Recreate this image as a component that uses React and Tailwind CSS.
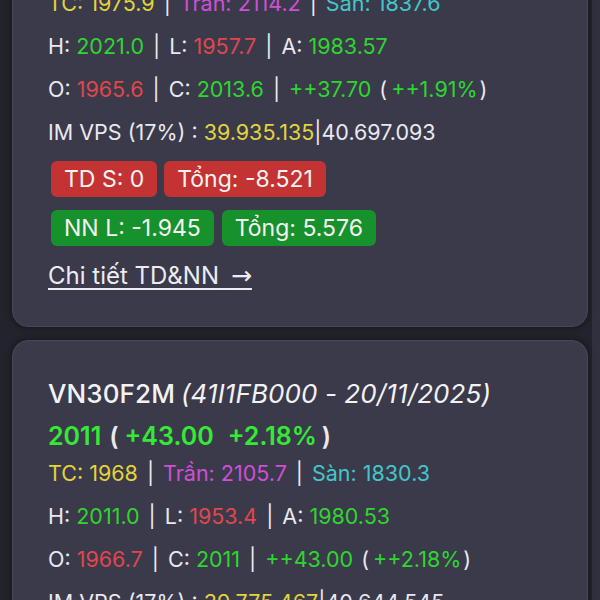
import React from "react";

const W = "text-[#e9e9ef]";
const Y = "text-[#e3d33c]";
const M = "text-[#cf4fd6]";
const C = "text-[#43c6c9]";
const G = "text-[#2fd62f]";
const R = "text-[#e0474c]";

function Sep() {
  return <span className={`${W} mx-[9px]`}>|</span>;
}

function Card({ data }) {
  return (
    <div className="rounded-[16px] bg-[#3a3a4b] border border-[#474859] shadow-[0_0_6px_rgba(0,0,0,0.5)] pl-[35px] pr-4 pt-[35px]">
      <div className="h-[34px] flex items-center text-[26px] text-[#f2f2f5] tracking-[0.1px]">
        <span className="font-medium">{data.code}</span>
        <span className="italic ml-[6px]">({data.sub})</span>
      </div>
      <div className="h-[44px] flex items-center text-[25px] font-semibold mt-[5px]">
        <span className="text-[#34ea34]">{data.price}</span>
        <span className={`${W} ml-[8px]`}>(</span>
        <span className="text-[#34ea34] ml-[6px]">{data.chg}</span>
        <span className="text-[#34ea34] ml-[14px]">{data.pct}</span>
        <span className={`${W} ml-[5px]`}>)</span>
      </div>
      <div className="flex flex-col text-[21.5px]">
        <div className="h-[43px] flex items-center mt-[-7px]">
          <span className={Y}>TC: {data.tc}</span>
          <Sep />
          <span className={M}>Trần: {data.tran}</span>
          <Sep />
          <span className={C}>Sàn: {data.san}</span>
        </div>
        <div className="h-[43px] flex items-center">
          <span className={W}>H:&nbsp;</span>
          <span className={G}>{data.h}</span>
          <Sep />
          <span className={W}>L:&nbsp;</span>
          <span className={R}>{data.l}</span>
          <Sep />
          <span className={W}>A:&nbsp;</span>
          <span className={G}>{data.a}</span>
        </div>
        <div className="h-[43px] flex items-center">
          <span className={W}>O:&nbsp;</span>
          <span className={R}>{data.o}</span>
          <Sep />
          <span className={W}>C:&nbsp;</span>
          <span className={G}>{data.c}</span>
          <Sep />
          <span className={G}>{data.oc}</span>
          <span className={`${W} ml-[8px]`}>(</span>
          <span className={`${G} ml-[4px]`}>{data.ocp}</span>
          <span className={`${W} ml-[2px]`}>)</span>
        </div>
        <div className="h-[43px] flex items-center">
          <span className={W}>IM VPS (17%)&nbsp;:&nbsp;</span>
          <span className={Y}>{data.im1}</span>
          <span className={W}>|</span>
          <span className={W}>{data.im2}</span>
        </div>
        <div className="flex gap-[7px] mt-[7px] ml-[3px] text-[23px] text-[#f4f4f4]">
          <span className="h-[36px] flex items-center px-[13px] rounded-[6px] bg-[#c43333]">TD S: {data.tds}</span>
          <span className="h-[36px] flex items-center px-[13px] rounded-[6px] bg-[#c43333]">Tổng: {data.tdt}</span>
        </div>
        <div className="flex gap-[8px] mt-[13px] ml-[3px] text-[23px] text-[#f4f4f4]">
          <span className="h-[36px] flex items-center px-[13px] rounded-[6px] bg-[#17912b]">NN L: {data.nnl}</span>
          <span className="h-[36px] flex items-center px-[13px] rounded-[6px] bg-[#17912b]">Tổng: {data.nnt}</span>
        </div>
        <div className="h-[40px] flex items-center mt-[10px] mb-[30px]">
          <span className="text-[24px] text-[#ececf2] underline underline-offset-[4px] decoration-[1.5px]">
            Chi tiết TD&amp;NN{"\u2002"}
            <span className="text-[25px]" style={{ fontFamily: "'DejaVu Sans', sans-serif" }}>→</span>
          </span>
        </div>
      </div>
    </div>
  );
}

const c1 = {
  code: "VN30F1M",
  sub: "41I1FA000 - 16/10/2025",
  price: "2013.6",
  chg: "+37.70",
  pct: "+1.91%",
  tc: "1975.9",
  tran: "2114.2",
  san: "1837.6",
  h: "2021.0",
  l: "1957.7",
  a: "1983.57",
  o: "1965.6",
  c: "2013.6",
  oc: "++37.70",
  ocp: "++1.91%",
  im1: "39.935.135",
  im2: "40.697.093",
  tds: "0",
  tdt: "-8.521",
  nnl: "-1.945",
  nnt: "5.576",
};

const c2 = {
  code: "VN30F2M",
  sub: "41I1FB000 - 20/11/2025",
  price: "2011",
  chg: "+43.00",
  pct: "+2.18%",
  tc: "1968",
  tran: "2105.7",
  san: "1830.3",
  h: "2011.0",
  l: "1953.4",
  a: "1980.53",
  o: "1966.7",
  c: "2011",
  oc: "++43.00",
  ocp: "++2.18%",
  im1: "39.775.467",
  im2: "40.644.545",
  tds: "0",
  tdt: "-6.210",
  nnl: "-1.120",
  nnt: "3.402",
};

export default function App() {
  return (
    <div
      className="w-[600px] h-[600px] overflow-hidden bg-[#23232c]"
      style={{ fontFamily: "Inter, 'Noto Sans', sans-serif" }}
    >
      <div className="flex flex-col gap-[13px] pl-[12px] pr-[4px] mt-[-130px] border-r-[8px] border-[#30303f]">
        <Card data={c1} />
        <Card data={c2} />
      </div>
    </div>
  );
}
